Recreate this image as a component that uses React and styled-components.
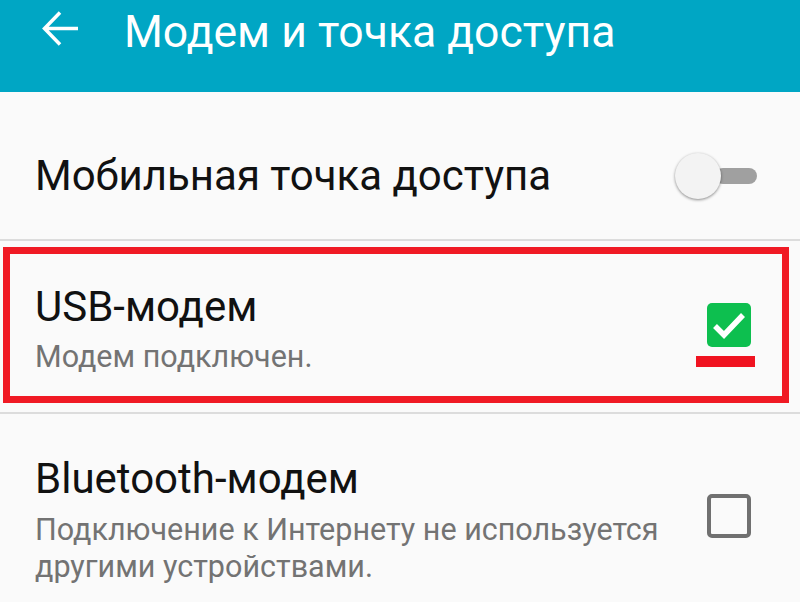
import React from 'react';
import styled, { createGlobalStyle } from 'styled-components';

const Global = createGlobalStyle`
  body {
    margin: 0;
    background: #fafafa;
    font-family: Roboto, "Noto Sans", sans-serif;
  }
`;

const Page = styled.div`
  width: 800px;
  height: 602px;
  overflow: hidden;
  background: #fafafa;
`;

const Header = styled.header`
  height: 92px;
  background: #00a6c4;
  display: flex;
  align-items: flex-start;
  padding: 8px 0 0 42px;
  box-sizing: border-box;
`;

const Back = styled.svg`
  width: 38px;
  height: 38px;
  margin-top: 3px;
  flex: none;
`;

const Title = styled.h1`
  margin: 0 0 0 44px;
  font-size: 44.5px;
  line-height: 48px;
  font-weight: 400;
  color: #fff;
`;

const Row = styled.div`
  position: relative;
  display: flex;
  align-items: ${p => p.$align || 'center'};
  box-sizing: border-box;
  height: ${p => p.$height}px;
  padding: ${p => p.$pad || '0'} 43px 0 35px;
  border-bottom: 2px solid #dcdcdc;
`;

const Text = styled.div`
  flex: 1;
  min-width: 0;
  padding-right: ${p => p.$gap || 0}px;
`;

const Label = styled.div`
  font-size: 42px;
  line-height: 50px;
  color: #111;
`;

const Sub = styled.div`
  margin-top: ${p => p.$top || 6}px;
  font-size: 30.5px;
  line-height: 37px;
  color: #737373;
`;

const Switch = styled.div`
  position: relative;
  width: 82px;
  height: 48px;
  flex: none;
`;

const Track = styled.div`
  position: absolute;
  left: 40px;
  right: 0;
  top: 16px;
  height: 16px;
  border-radius: 8px;
  background: #a0a0a0;
`;

const Thumb = styled.div`
  position: absolute;
  left: 0;
  top: 1px;
  width: 46px;
  height: 46px;
  border-radius: 50%;
  background: #f3f3f3;
  box-shadow: 0 1px 3px rgba(0, 0, 0, 0.45);
`;

const Check = styled.div`
  width: 44px;
  height: 44px;
  flex: none;
  box-sizing: border-box;
  border-radius: 5px;
  margin-right: 6px;
  display: flex;
  align-items: center;
  justify-content: center;
  background: ${p => (p.$on ? '#0dbf4f' : 'transparent')};
  border: ${p => (p.$on ? 'none' : '4px solid #707070')};
`;

const CheckCol = styled.div`
  position: relative;
  flex: none;
  margin-top: ${p => p.$shift || 0}px;
`;

const Underline = styled.div`
  position: absolute;
  left: -11px;
  top: 53px;
  width: 59px;
  height: 11px;
  background: #f01320;
`;

const Highlight = styled.div`
  position: absolute;
  left: 3px;
  right: 11px;
  top: 6px;
  bottom: 9px;
  border: 7px solid #f01a24;
  pointer-events: none;
`;

export default function App() {
  return (
    <Page>
      <Global />
      <Header>
        <Back viewBox="0 0 38 38">
          <path
            d="M36 17.5H3M18 1.5L2.5 17.5L18 33.5"
            fill="none"
            stroke="#fff"
            strokeWidth="3.5"
          />
        </Back>
        <Title>Модем и точка доступа</Title>
      </Header>

      <Row $height={149} $pad="20px">
        <Text>
          <Label>Мобильная точка доступа</Label>
        </Text>
        <Switch>
          <Track />
          <Thumb />
        </Switch>
      </Row>

      <Row $height={173} $align="flex-start" $pad="41px">
        <Text>
          <Label>USB-модем</Label>
          <Sub>Модем подключен.</Sub>
        </Text>
        <CheckCol $shift={21}>
          <Check $on>
            <svg width="44" height="44" viewBox="0 0 44 44">
              <path
                d="M8 23L17 32L36 12"
                fill="none"
                stroke="#fff"
                strokeWidth="5.5"
              />
            </svg>
          </Check>
          <Underline />
        </CheckCol>
        <Highlight />
      </Row>

      <Row $height={220} $align="flex-start" $pad="40px">
        <Text $gap={8}>
          <Label>Bluetooth-модем</Label>
          <Sub $top={7}>
            Подключение к Интернету не используется другими устройствами.
          </Sub>
        </Text>
        <CheckCol $shift={40}>
          <Check />
        </CheckCol>
      </Row>
    </Page>
  );
}
